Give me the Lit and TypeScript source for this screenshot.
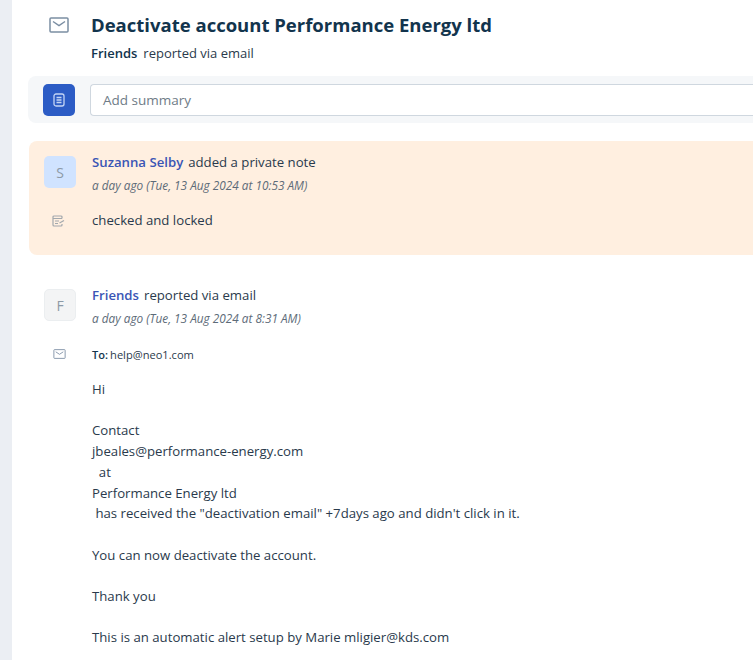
import { LitElement, html, css } from "lit";
import { customElement } from "lit/decorators.js";

const mail = (s: number, sw: number) => html`<svg width=${s} height=${Math.round(s * 0.8)} viewBox="0 0 20 16" fill="none" stroke="#7b8ea3" stroke-width=${sw}><rect x="1" y="1" width="18" height="14" rx="1"/><path d="M4 4.5l6 4 6-4"/></svg>`;

@customElement("app-root")
export class AppRoot extends LitElement {
  static styles = css`
    :host { display: block; width: 753px; height: 660px; overflow: hidden; background: #fff; font-family: "Open Sans", "Noto Sans", sans-serif; color: #2a3a4c; font-size: 13.2px; }
    .frame { display: flex; height: 660px; }
    .rail { width: 12px; flex: none; background: #ebeef3; }
    .main { flex: 1; min-width: 0; padding-left: 16px; }
    .head { display: flex; height: 76px; }
    .head-ic { width: 63px; flex: none; padding: 17px 0 0 21px; box-sizing: border-box; }
    h1 { margin: 12px 0 0; font-size: 18.5px; line-height: 26px; font-weight: 700; color: #12344d; white-space: nowrap; }
    .sub { margin-top: 6px; line-height: 18px; font-size: 13px; color: #2a3a4c; }
    .sub b { font-weight: 600; color: #12344d; margin-right: 6px; }
    .bar { height: 47px; background: #f5f7f9; border-radius: 8px 0 0 8px; display: flex; align-items: center; gap: 15px; padding-left: 15px; }
    .sq { width: 32px; height: 32px; flex: none; border-radius: 5px; background: #2c5cc5; display: flex; align-items: center; justify-content: center; }
    .inp { flex: 1; height: 32px; box-sizing: border-box; background: #fff; border: 1px solid #cfd7df; border-right: 0; border-radius: 4px 0 0 4px; padding-left: 12px; display: flex; align-items: center; color: #6f7c87; font-size: 13.5px; }
    .note { margin: 18px 0 0 1px; height: 114px; background: #ffefe0; border-radius: 8px 0 0 8px; box-sizing: border-box; padding: 15px 0 0 15px; }
    .row { display: flex; }
    .ava { width: 32px; height: 32px; flex: none; border-radius: 5px; display: flex; align-items: center; justify-content: center; font-size: 14px; color: #8c99a6; box-sizing: border-box; }
    .s { background: #d0e3ff; }
    .f { background: #f3f4f5; border: 1px solid #ebeef0; }
    .who { margin-left: 16px; }
    .line { line-height: 12px; white-space: nowrap; }
    .line a { color: #3a55b5; font-weight: 600; margin-right: 5px; }
    .time { margin-top: 9px; font-size: 11.8px; line-height: 16px; font-style: italic; color: #5d6b78; white-space: nowrap; }
    .ic { width: 48px; flex: none; padding-left: 9px; box-sizing: border-box; }
    .noteic { padding-left: 8px; padding-top: 3px; }
    .noteb { margin-top: 17px; }
    .txt { line-height: 20px; color: #2a3a4c; }
    .mail { padding: 34px 0 0 16px; }
    .to { margin-top: 19px; align-items: center; height: 18px; font-size: 11.1px; }
    .to b { font-weight: 600; color: #12344d; margin-right: 2px; }
    .body { margin: 16px 0 0 48px; line-height: 20.7px; white-space: pre; color: #2a3a4c; }
  `;
  render() {
    return html`<div class="frame"><div class="rail"></div><div class="main">
      <div class="head">
        <div class="head-ic">${mail(20, 1.5)}</div>
        <div><h1>Deactivate account Performance Energy ltd</h1>
        <div class="sub"><b>Friends</b>reported via email</div></div>
      </div>
      <div class="bar">
        <div class="sq"><svg width="12" height="14" viewBox="0 0 12 14" fill="none" stroke="#c4d5f5" stroke-width="1.3"><rect x="1" y="1" width="10" height="12" rx="2"/><path d="M3.500 4.500h5M3.500 7h5M3.500 9.500h5"/></svg></div>
        <div class="inp">Add summary</div>
      </div>
      <div class="note">
        <div class="row"><div class="ava s">S</div><div class="who"><div class="line"><a>Suzanna Selby</a>added a private note</div><div class="time">a day ago (Tue, 13 Aug 2024 at 10:53 AM)</div></div></div>
        <div class="row noteb"><div class="ic noteic"><svg width="13" height="12" viewBox="0 0 13 12" fill="none" stroke="#a3a8ad" stroke-width="1.2"><path d="M10 3.500V2A1 1 0 0 0 9 1H2A1 1 0 0 0 1 2v8a1 1 0 0 0 1 1h7a1 1 0 0 0 1-1V9"/><path d="M1 3.500h9M3 6h4M3 8.500h3M7.500 8l4.500-2.500"/></svg></div><div class="txt">checked and locked</div></div>
      </div>
      <div class="mail">
        <div class="row"><div class="ava f">F</div><div class="who"><div class="line"><a>Friends</a>reported via email</div><div class="time">a day ago (Tue, 13 Aug 2024 at 8:31 AM)</div></div></div>
        <div class="row to"><div class="ic">${mail(13, 1.4)}</div><div><b>To:</b>help@neo1.com</div></div>
        <div class="body">Hi

Contact
jbeales@performance-energy.com
  at
Performance Energy ltd
 has received the "deactivation email" +7days ago and didn't click in it.

You can now deactivate the account.

Thank you

This is an automatic alert setup by Marie mligier@kds.com</div>
      </div>
    </div></div>`;
  }
}
